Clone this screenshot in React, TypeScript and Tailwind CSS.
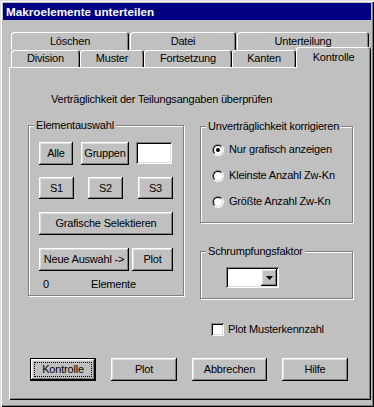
import type { ReactNode } from 'react'

const raised =
  'bg-[#c0c0c0] shadow-[inset_-1px_-1px_0_#000,inset_1px_1px_0_#fff,inset_-2px_-2px_0_#808080,inset_2px_2px_0_#dfdfdf]'
const sunken =
  'bg-white shadow-[inset_1px_1px_0_#808080,inset_-1px_-1px_0_#fff,inset_2px_2px_0_#000,inset_-2px_-2px_0_#dfdfdf]'

function Btn({ className, children }: { className: string; children: ReactNode }) {
  return <div className={`flex items-center justify-center leading-[13px] ${raised} ${className}`}>{children}</div>
}

function Group({ label, className, children }: { label: string; className: string; children?: ReactNode }) {
  return (
    <div className={`relative border border-[#808080] shadow-[inset_1px_1px_0_#fff,1px_1px_0_#fff] ${className}`}>
      <span className="absolute left-[5px] top-[-7px] bg-[#c0c0c0] px-[2px] leading-[13px]">{label}</span>
      {children}
    </div>
  )
}

function Tab({ className, label }: { className: string; label: string }) {
  return (
    <div
      className={`flex items-center justify-center rounded-t-[3px] bg-[#c0c0c0] leading-[13px] shadow-[inset_1px_1px_0_#fff,inset_-1px_0_0_#000,inset_-2px_0_0_#808080] ${className}`}
    >
      {label}
    </div>
  )
}

function Radio({ checked, label }: { checked?: boolean; label: string }) {
  return (
    <div className="flex h-[13px] items-center gap-[5px]">
      <div className="h-[12px] w-[12px] rounded-full border border-t-[#808080] border-l-[#808080] border-r-white border-b-white">
        <div className="flex h-full w-full items-center justify-center rounded-full border border-t-black border-l-black border-r-[#dfdfdf] border-b-[#dfdfdf] bg-white">
          {checked && <div className="h-[4px] w-[4px] rounded-full bg-black" />}
        </div>
      </div>
      <span className="leading-[13px]">{label}</span>
    </div>
  )
}

export default function App() {
  return (
    <div className="h-[407px] w-[374px] overflow-hidden bg-[#c0c0c0] p-[3px] font-['Liberation_Sans',Arial,sans-serif] text-[11px] tracking-[-0.2px] text-black shadow-[inset_1px_1px_0_#dfdfdf,inset_2px_2px_0_#fff,inset_-1px_-1px_0_#000,inset_-2px_-2px_0_#808080]">
      <div className="flex h-[17px] items-center bg-[#000080] pl-[3px] text-[11.7px] font-bold tracking-normal text-white">
        Makroelemente unterteilen
      </div>

      {/* tab rows */}
      <div className="ml-[8px] mt-[12px] flex h-[18px] gap-[1px]">
        <Tab className="h-[18px] w-[118px]" label="Löschen" />
        <Tab className="h-[18px] w-[106px]" label="Datei" />
        <Tab className="h-[18px] w-[132px]" label="Unterteilung" />
      </div>
      <div className="ml-[8px] flex h-[17px]">
        <Tab className="h-[17px] w-[69px]" label="Division" />
        <Tab className="h-[17px] w-[64px]" label="Muster" />
        <Tab className="h-[17px] w-[88px]" label="Fortsetzung" />
        <Tab className="h-[17px] w-[64px]" label="Kanten" />
        <Tab className="relative z-10 -mt-[3px] h-[21px] w-[75px] items-start pt-[4px]" label="Kontrolle" />
      </div>

      {/* panel */}
      <div className="ml-[6px] h-[333px] w-[362px] pt-[26px] shadow-[inset_1px_1px_0_#fff,inset_-1px_-1px_0_#000,inset_-2px_-2px_0_#808080]">
        <div className="pl-[42px] leading-[13px]">Verträglichkeit der Teilungsangaben überprüfen</div>

        <div className="mt-[19px] flex h-[211px] items-start">
          <Group label="Elementauswahl" className="ml-[19px] h-[171px] w-[156px] pl-[10px] pt-[16px]">
            <div className="flex">
              <Btn className="h-[23px] w-[34px]">Alle</Btn>
              <Btn className="ml-[8px] h-[23px] w-[48px]">Gruppen</Btn>
              <div className={`ml-[7px] h-[22px] w-[36px] ${sunken}`} />
            </div>
            <div className="mt-[12px] flex">
              <Btn className="h-[22px] w-[35px]">S1</Btn>
              <Btn className="ml-[14px] h-[22px] w-[35px]">S2</Btn>
              <Btn className="ml-[15px] h-[22px] w-[35px]">S3</Btn>
            </div>
            <Btn className="mt-[13px] h-[23px] w-[134px]">Grafische Selektieren</Btn>
            <div className="mt-[13px] flex">
              <Btn className="h-[23px] w-[90px]">Neue Auswahl -&gt;</Btn>
              <Btn className="ml-[3px] h-[23px] w-[41px]">Plot</Btn>
            </div>
            <div className="mt-[7px] flex leading-[13px]">
              <span className="ml-[4px] w-[48px]">0</span>
              <span>Elemente</span>
            </div>
          </Group>

          <div className="ml-[16px] flex flex-col">
            <Group label="Unverträglichkeit korrigieren" className="mt-[1px] h-[97px] w-[153px] pl-[11px] pt-[16px]">
              <div className="flex flex-col gap-[13px]">
                <Radio checked label="Nur grafisch anzeigen" />
                <Radio label="Kleinste Anzahl Zw-Kn" />
                <Radio label="Größte Anzahl Zw-Kn" />
              </div>
            </Group>
            <Group label="Schrumpfungsfaktor" className="mt-[28px] h-[48px] w-[153px] pl-[25px] pt-[15px]">
              <div className={`flex h-[21px] w-[53px] justify-end p-[2px] ${sunken}`}>
                <div className={`flex h-[17px] w-[16px] items-center justify-center ${raised}`}>
                  <svg width="7" height="4" viewBox="0 0 7 4">
                    <path d="M0 0h7L3.5 4z" fill="#000" />
                  </svg>
                </div>
              </div>
            </Group>
            <div className="ml-[11px] mt-[24px] flex h-[13px] items-center gap-[4px]">
              <div className={`h-[13px] w-[13px] ${sunken}`} />
              <span className="leading-[13px]">Plot Musterkennzahl</span>
            </div>
          </div>
        </div>

        <div className="mt-[22px] flex">
          <div className="ml-[21px] h-[23px] w-[66px] border border-black">
            <div className={`relative flex h-full w-full items-center justify-center leading-[13px] ${raised}`}>
              <span className="absolute inset-[3px] border border-dotted border-black" />
              Kontrolle
            </div>
          </div>
          <Btn className="ml-[15px] h-[23px] w-[66px]">Plot</Btn>
          <Btn className="ml-[15px] h-[23px] w-[75px]">Abbrechen</Btn>
          <Btn className="ml-[15px] h-[23px] w-[66px]">Hilfe</Btn>
        </div>
      </div>
    </div>
  )
}
